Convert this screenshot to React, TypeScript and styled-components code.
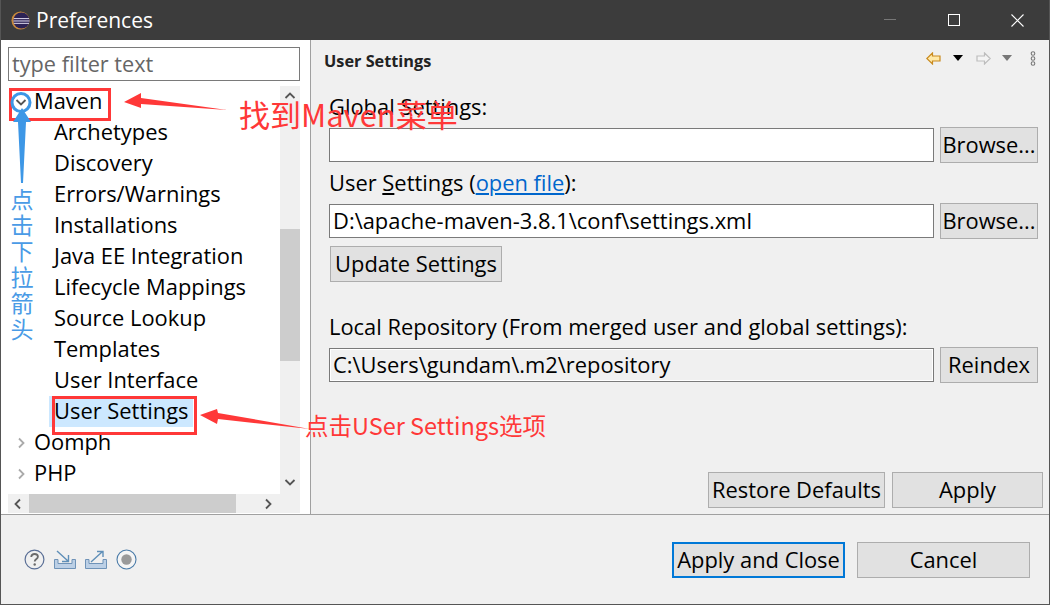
import React from "react";
import styled, { createGlobalStyle } from "styled-components";

const Global = createGlobalStyle`
  html, body { margin: 0; padding: 0; background: #f0f0f0; overflow: hidden; }
  * { box-sizing: border-box; }
  #root { font-family: "Open Sans", "Noto Sans CJK SC", sans-serif; font-size: 21.9px; color: #000; }
`;

const Dialog = styled.div`
  position: relative;
  width: 1050px;
  height: 605px;
  display: flex;
  flex-direction: column;
  background: #f0f0f0;
  border-left: 1px solid #555;
  border-right: 1px solid #555;
  border-bottom: 1px solid #555;
  overflow: hidden;
`;
const TitleBar = styled.div`
  height: 40px;
  flex: none;
  background: #3c3c3c;
  display: flex;
  align-items: center;
  padding-left: 10px;
  color: #fff;
  font-size: 21px;
`;
const TitleText = styled.span`
  flex: 1;
  line-height: 40px;
  margin-left: 6px;
`;
const WinButton = styled.div`
  width: 63.5px;
  height: 40px;
  display: flex;
  align-items: center;
  justify-content: center;
`;
const Main = styled.div`
  flex: 1;
  display: flex;
  min-height: 0;
`;
const Left = styled.div`
  width: 310px;
  flex: none;
  background: #fff;
  padding: 7px 10px 0 7px;
  border-right: 1px solid #a0a0a0;
  display: flex;
  flex-direction: column;
`;
const Filter = styled.div`
  height: 34px;
  flex: none;
  border: 1px solid #7a7a7a;
  padding-left: 3px;
  line-height: 32px;
  color: #666;
  font-size: 21.7px;
`;
const TreeArea = styled.div`
  margin-top: 5px;
  height: 427px;
  display: grid;
  grid-template-columns: 272px 20px;
  grid-template-rows: 408px 19px;
`;
const Tree = styled.div`
  overflow: hidden;
`;
const Row = styled.div<{ $indent: number }>`
  height: 31px;
  line-height: 29px;
  padding-left: ${(p) => p.$indent}px;
  display: flex;
  align-items: flex-start;
  white-space: nowrap;
`;
const Twisty = styled.span`
  width: 26px;
  height: 31px;
  display: flex;
  align-items: center;
  padding-left: 7px;
`;
const Selected = styled.span`
  display: block;
  background: #cce8ff;
  padding: 0 4px 0 5px;
  margin-left: -5px;
  height: 31px;
`;
const VBar = styled.div`
  background: #f0f0f0;
  display: flex;
  flex-direction: column;
  justify-content: space-between;
  align-items: center;
  padding: 4px 0 6px;
  position: relative;
`;
const VThumb = styled.div`
  position: absolute;
  left: 0;
  right: 0;
  top: 143px;
  height: 132px;
  background: #cdcdcd;
`;
const HBar = styled.div`
  background: #f0f0f0;
  display: flex;
  justify-content: space-between;
  align-items: center;
  padding: 0 6px 0 4px;
  position: relative;
`;
const HThumb = styled.div`
  position: absolute;
  left: 21px;
  width: 207px;
  top: 0;
  bottom: 0;
  background: #cdcdcd;
`;
const Corner = styled.div`
  background: #f0f0f0;
`;
const Right = styled.div`
  flex: 1;
  padding: 0 6px 0 18px;
  display: flex;
  flex-direction: column;
`;
const Header = styled.div`
  height: 43px;
  flex: none;
  display: flex;
  align-items: center;
  margin: 0 -6px 0 -5px;
  padding-right: 13px;
`;
const HeaderTitle = styled.div`
  flex: 1;
  font-size: 16.3px;
  font-weight: 700;
  color: #222;
  padding-bottom: 2px;
`;
const HeaderIcons = styled.div`
  display: flex;
  align-items: center;
  margin-top: -7px;
`;
const IconSlot = styled.span<{ $ml?: number }>`
  display: flex;
  margin-left: ${(p) => p.$ml ?? 0}px;
`;
const Label = styled.div<{ $top: number }>`
  margin-top: ${(p) => p.$top}px;
  height: 31px;
  flex: none;
  line-height: 29px;
  white-space: nowrap;
`;
const FieldRow = styled.div<{ $top: number }>`
  display: flex;
  align-items: center;
  gap: 6px;
  height: 36px;
  flex: none;
  padding-right: 5px;
  margin-top: ${(p) => p.$top}px;
`;
const Field = styled.div<{ $read?: boolean }>`
  flex: 1;
  height: 34px;
  background: ${(p) => (p.$read ? "#f0f0f0" : "#fff")};
  border: 1px solid #7a7a7a;
  box-shadow: ${(p) => (p.$read ? "inset 0 0 0 1px #fff" : "none")};
  padding-left: 3px;
  line-height: 32px;
  white-space: nowrap;
`;
const Btn = styled.div<{ $w: number; $def?: boolean }>`
  width: ${(p) => p.$w}px;
  height: 36px;
  flex: none;
  background: #e1e1e1;
  border: ${(p) => (p.$def ? "2px solid #0078d7" : "1px solid #adadad")};
  line-height: ${(p) => (p.$def ? 32 : 34)}px;
  text-align: center;
  white-space: nowrap;
`;
const UpdateBtn = styled(Btn)`
  margin: 7px 0 0 1px;
`;
const Link = styled.span`
  color: #0066cc;
  text-decoration: underline;
`;
const RightActions = styled.div`
  margin-top: auto;
  display: flex;
  justify-content: flex-end;
  gap: 7px;
  margin-bottom: 6px;
`;
const Footer = styled.div`
  height: 90px;
  flex: none;
  border-top: 1px solid #a0a0a0;
  display: flex;
  align-items: center;
  padding: 0 19px 0 23px;
`;
const FooterIcons = styled.div`
  display: flex;
  align-items: center;
  gap: 9px;
  flex: 1;
`;
const FooterButtons = styled.div`
  display: flex;
  gap: 12px;
`;
const Note = styled.div<{ $x: number; $y: number; $size: number; $c: string }>`
  position: absolute;
  left: ${(p) => p.$x}px;
  top: ${(p) => p.$y}px;
  font-size: ${(p) => p.$size}px;
  color: ${(p) => p.$c};
  line-height: 1;
  white-space: nowrap;
  font-family: "Noto Sans CJK SC", "Open Sans", sans-serif;
`;
const VNote = styled.div`
  position: absolute;
  left: 9px;
  top: 185px;
  width: 24px;
  font-size: 23px;
  line-height: 26px;
  color: #4a9be6;
  text-align: center;
  font-family: "Noto Sans CJK SC", sans-serif;
`;
const RedBox = styled.div<{ $x: number; $y: number; $w: number; $h: number }>`
  position: absolute;
  left: ${(p) => p.$x}px;
  top: ${(p) => p.$y}px;
  width: ${(p) => p.$w}px;
  height: ${(p) => p.$h}px;
  border: 3px solid #ff3838;
`;
const Overlay = styled.svg`
  position: absolute;
  left: -1px;
  top: 0;
  pointer-events: none;
`;

const Chev = ({ d, c = "#555" }: { d: string; c?: string }) => (
  <svg width="12" height="12" viewBox="0 0 12 12">
    <path d={d} fill="none" stroke={c} strokeWidth="1.8" />
  </svg>
);
const RIGHT = "M4 1.5L8.5 6L4 10.5";
const LEFT = "M8 1.5L3.5 6L8 10.5";
const UP = "M1.5 8L6 3.5L10.5 8";
const DOWN = "M1.5 4L6 8.5L10.5 4";

const Logo = () => (
  <svg width="19" height="19" viewBox="0 0 20 20">
    <circle cx="10" cy="10" r="9.5" fill="#c98a3c" />
    <circle cx="11" cy="10" r="8.5" fill="#2c2255" />
    <path d="M3 8h16M2.5 10.5h17M3 13h16" stroke="#e8e4f4" strokeWidth="1" />
  </svg>
);
const ArrowL = () => (
  <svg width="15" height="13" viewBox="0 0 15 13">
    <path d="M6.5 1L0.8 6.5L6.5 12V9H14V4H6.5Z" fill="#ffe9a8" stroke="#c98a1e" strokeWidth="1.2" />
  </svg>
);
const ArrowR = () => (
  <svg width="15" height="13" viewBox="0 0 15 13">
    <path d="M8.5 1L14.2 6.5L8.5 12V9H1V4H8.5Z" fill="#f4f4f4" stroke="#bdbdbd" strokeWidth="1.2" />
  </svg>
);
const Tri = ({ c }: { c: string }) => (
  <svg width="10" height="6" viewBox="0 0 10 6">
    <path d="M0 0H10L5 6Z" fill={c} />
  </svg>
);
const Dots = () => (
  <svg width="6" height="15" viewBox="0 0 6 15">
    {[2.5, 7.5, 12.5].map((y) => (
      <circle key={y} cx="3" cy={y} r="1.8" fill="none" stroke="#777" strokeWidth="1.1" />
    ))}
  </svg>
);
const Help = () => (
  <svg width="21" height="21" viewBox="0 0 21 21">
    <circle cx="10.5" cy="10.5" r="9.4" fill="none" stroke="#5a6f96" strokeWidth="1.2" />
    <path d="M7.2 8C7.5 5.8 9 5 10.6 5C12.5 5 13.9 6.2 13.9 7.8C13.9 10 10.7 10 10.7 12.6" fill="none" stroke="#6a6a6a" strokeWidth="1.8" />
    <circle cx="10.7" cy="15.5" r="1.2" fill="#6a6a6a" />
  </svg>
);
const Tray = ({ out }: { out?: boolean }) => (
  <svg width="22" height="19" viewBox="0 0 22 19">
    <path d="M0.5 9.5H4V13.5H18V9.5H21.5V18.5H0.5Z" fill="#bcd0e6" stroke="#6f93b8" />
    {out ? (
      <path d="M6 12L17 2M12 1.5H18V7" fill="none" stroke="#5f8fb8" strokeWidth="1.4" />
    ) : (
      <path d="M3 1L14 11M14.5 5V11.5H8" fill="none" stroke="#5f8fb8" strokeWidth="1.4" />
    )}
  </svg>
);
const Rec = () => (
  <svg width="21" height="21" viewBox="0 0 21 21">
    <circle cx="10.5" cy="10.5" r="9.5" fill="#f5f5f5" stroke="#4a7ba8" strokeWidth="1.1" />
    <circle cx="10.5" cy="10.5" r="5.2" fill="#9a9a9a" />
  </svg>
);

const children = [
  "Archetypes",
  "Discovery",
  "Errors/Warnings",
  "Installations",
  "Java EE Integration",
  "Lifecycle Mappings",
  "Source Lookup",
  "Templates",
  "User Interface",
];

export default function App() {
  return (
    <Dialog>
      <Global />
      <TitleBar>
        <Logo />
        <TitleText>Preferences</TitleText>
        <WinButton>
          <svg width="12" height="2"><rect width="12" height="1" fill="#777" /></svg>
        </WinButton>
        <WinButton>
          <svg width="12" height="12"><rect x="0.5" y="0.5" width="11" height="11" fill="none" stroke="#fff" /></svg>
        </WinButton>
        <WinButton>
          <svg width="13" height="13"><path d="M0.5 0.5L12.5 12.5M12.5 0.5L0.5 12.5" stroke="#fff" strokeWidth="1.1" /></svg>
        </WinButton>
      </TitleBar>
      <Main>
        <Left>
          <Filter>type filter text</Filter>
          <TreeArea>
            <Tree>
              <Row $indent={0}>
                <Twisty><Chev d={DOWN} /></Twisty>
                Maven
              </Row>
              {children.map((c) => (
                <Row key={c} $indent={46}>{c}</Row>
              ))}
              <Row $indent={46}><Selected>User Settings</Selected></Row>
              <Row $indent={0}>
                <Twisty><Chev d={RIGHT} c="#aaa" /></Twisty>
                Oomph
              </Row>
              <Row $indent={0}>
                <Twisty><Chev d={RIGHT} c="#aaa" /></Twisty>
                PHP
              </Row>
            </Tree>
            <VBar>
              <VThumb />
              <Chev d={UP} />
              <Chev d={DOWN} />
            </VBar>
            <HBar>
              <HThumb />
              <Chev d={LEFT} />
              <Chev d={RIGHT} />
            </HBar>
            <Corner />
          </TreeArea>
        </Left>
        <Right>
          <Header>
            <HeaderTitle>User Settings</HeaderTitle>
            <HeaderIcons>
              <IconSlot><ArrowL /></IconSlot>
              <IconSlot $ml={12}><Tri c="#000" /></IconSlot>
              <IconSlot $ml={13}><ArrowR /></IconSlot>
              <IconSlot $ml={11}><Tri c="#777" /></IconSlot>
              <IconSlot $ml={18}><Dots /></IconSlot>
            </HeaderIcons>
          </Header>
          <Label $top={9}>Global Settings:</Label>
          <FieldRow $top={4}>
            <Field />
            <Btn $w={98}>Browse...</Btn>
          </FieldRow>
          <Label $top={5}>User <u>S</u>ettings (<Link>open file</Link>):</Label>
          <FieldRow $top={4}>
            <Field>D:\apache-maven-3.8.1\conf\settings.xml</Field>
            <Btn $w={98}>Browse...</Btn>
          </FieldRow>
          <UpdateBtn $w={172}>Update Settings</UpdateBtn>
          <Label $top={30}>Local Repository (From merged user and global settings):</Label>
          <FieldRow $top={4}>
            <Field $read>C:\Users\gundam\.m2\repository</Field>
            <Btn $w={98}>Reindex</Btn>
          </FieldRow>
          <RightActions>
            <Btn $w={177}>Restore Defaults</Btn>
            <Btn $w={151}>Apply</Btn>
          </RightActions>
        </Right>
      </Main>
      <Footer>
        <FooterIcons>
          <Help />
          <Tray />
          <Tray out />
          <Rec />
        </FooterIcons>
        <FooterButtons>
          <Btn $w={173} $def>Apply and Close</Btn>
          <Btn $w={173}>Cancel</Btn>
        </FooterButtons>
      </Footer>
      <RedBox $x={8} $y={88} $w={102} $h={33} />
      <RedBox $x={51} $y={396} $w={145} $h={39} />
      <Overlay width="1050" height="605" viewBox="0 0 1050 605">
        <path d="M124 102L141 93L141 98L227 110L141 104L141 108Z" fill="#ff3838" />
        <path d="M200 415L217 409L218 413L310 429L218 419L217 424Z" fill="#ff3838" />
        <path d="M22 108L31 122L26 122L23 183L21 183L18 122L13 122Z" fill="#3d97e6" />
        <circle cx="21" cy="102.5" r="9" fill="none" stroke="#3d97e6" strokeWidth="3" />
      </Overlay>
      <Note $x={238} $y={98} $size={31} $c="#ff3838">找到Maven菜单</Note>
      <Note $x={304} $y={414} $size={23.5} $c="#ff3838">点击USer Settings选项</Note>
      <VNote>点<br />击<br />下<br />拉<br />箭<br />头</VNote>
    </Dialog>
  );
}
